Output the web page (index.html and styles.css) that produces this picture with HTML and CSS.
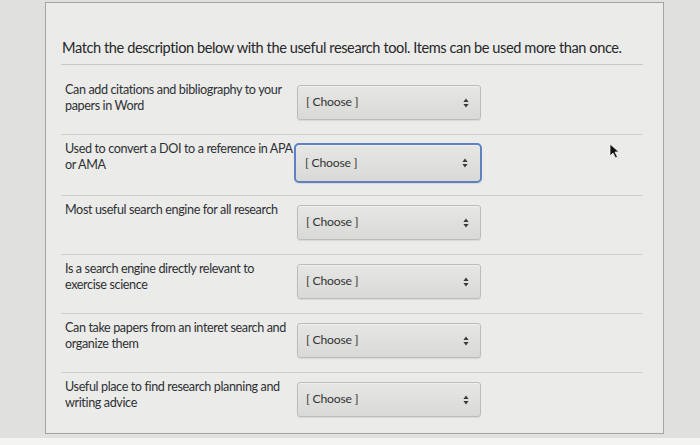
FILE: index.html
```html
<!DOCTYPE html>
<html>
<head>
<meta charset="utf-8">
<link rel="stylesheet" href="styles.css">
</head>
<body>
<div class="panel">
  <p class="question">Match the description below with the useful research tool. Items can be used more than once.</p>
  <div class="rows">
    <div class="row first">
      <div class="label">Can add citations and bibliography to your<br>papers in Word</div>
      <div class="select"><span>[ Choose ]</span><svg class="arrows" width="6" height="10" viewBox="0 0 6 10"><path d="M3 0.5 L5.6 4 H0.4 Z M3 9.5 L5.6 6 H0.4 Z" fill="#3a3a3a"/></svg></div>
    </div>
    <div class="row focus-row">
      <div class="label">Used to convert a DOI to a reference in APA<br>or AMA</div>
      <div class="select focus"><span>[ Choose ]</span><svg class="arrows" width="6" height="10" viewBox="0 0 6 10"><path d="M3 0.5 L5.6 4 H0.4 Z M3 9.5 L5.6 6 H0.4 Z" fill="#3a3a3a"/></svg></div>
    </div>
    <div class="row">
      <div class="label">Most useful search engine for all research</div>
      <div class="select"><span>[ Choose ]</span><svg class="arrows" width="6" height="10" viewBox="0 0 6 10"><path d="M3 0.5 L5.6 4 H0.4 Z M3 9.5 L5.6 6 H0.4 Z" fill="#3a3a3a"/></svg></div>
    </div>
    <div class="row">
      <div class="label">Is a search engine directly relevant to<br>exercise science</div>
      <div class="select"><span>[ Choose ]</span><svg class="arrows" width="6" height="10" viewBox="0 0 6 10"><path d="M3 0.5 L5.6 4 H0.4 Z M3 9.5 L5.6 6 H0.4 Z" fill="#3a3a3a"/></svg></div>
    </div>
    <div class="row">
      <div class="label">Can take papers from an interet search and<br>organize them</div>
      <div class="select"><span>[ Choose ]</span><svg class="arrows" width="6" height="10" viewBox="0 0 6 10"><path d="M3 0.5 L5.6 4 H0.4 Z M3 9.5 L5.6 6 H0.4 Z" fill="#3a3a3a"/></svg></div>
    </div>
    <div class="row last">
      <div class="label">Useful place to find research planning and<br>writing advice</div>
      <div class="select"><span>[ Choose ]</span><svg class="arrows" width="6" height="10" viewBox="0 0 6 10"><path d="M3 0.5 L5.6 4 H0.4 Z M3 9.5 L5.6 6 H0.4 Z" fill="#3a3a3a"/></svg></div>
    </div>
  </div>
  <svg class="cursor" width="12" height="16" viewBox="0 0 12 16"><path d="M1 1 L1 13 L4 10 L6.5 15 L8.5 14 L6 9 L10 9 Z" fill="#111" stroke="#f4f4f4" stroke-width="0.8"/></svg>
</div>
<div class="bottom"></div>
</body>
</html>
```

FILE: styles.css
```css
html, body {
  margin: 0;
  padding: 0;
}
body {
  background: #e0e0de;
  font-family: Lato, "Open Sans", "Liberation Sans", sans-serif;
  color: #2f3133;
  width: 700px;
  height: 445px;
  overflow: hidden;
  position: relative;
}
.panel {
  position: relative;
  box-sizing: border-box;
  margin: 2px 0 0 45px;
  width: 619px;
  height: 432px;
  border: 1px solid #a4a4a2;
  background: #ebebe9;
  padding: 0 0 0 15px;
}
.question {
  margin: 0;
  padding: 36px 0 0 1px;
  font-size: 14.6px;
  letter-spacing: -0.42px;
  line-height: 18px;
  color: #26282a;
  white-space: nowrap;
  height: 25px;
  border-bottom: 1px solid #c9c9c7;
  width: 581px;
}
.rows {
  padding: 11px 0 0 0;
  width: 581px;
}
.row {
  display: flex;
  align-items: flex-start;
  padding: 9px 0 14px 4px;
  border-bottom: 1px solid #cfcfcd;
}
.row.focus-row {
  padding-bottom: 12px;
}
.row.last {
  border-bottom: none;
}
.label {
  width: 230px;
  margin-top: -3px;
  margin-right: 2px;
  font-size: 12.6px;
  letter-spacing: -0.38px;
  line-height: 16px;
  color: #2e3134;
  white-space: nowrap;
}
.select {
  box-sizing: border-box;
  width: 184px;
  height: 35px;
  border: 1px solid #bcbcba;
  border-radius: 3px;
  background: linear-gradient(#e6e6e4, #d9d9d7);
  box-shadow: inset 0 1px 0 #f0f0ee, 0 1px 1px rgba(0,0,0,0.08);
  display: flex;
  align-items: center;
  justify-content: space-between;
  padding: 0 11px 0 8px;
  font-size: 12.2px;
  letter-spacing: -0.2px;
  color: #333;
}
.select span {
  margin-top: -2px;
}
.select.focus {
  width: 188px;
  height: 40px;
  margin: -1px 0 0 -3px;
  border: 2px solid #5f80c2;
  border-radius: 5px;
  padding-left: 9px;
  padding-right: 12px;
}
.arrows {
  display: block;
}
.cursor {
  position: absolute;
  left: 563px;
  top: 140px;
}
.bottom {
  position: absolute;
  left: 0;
  top: 438px;
  width: 700px;
  height: 7px;
  background: #f4f4f2;
}
```
